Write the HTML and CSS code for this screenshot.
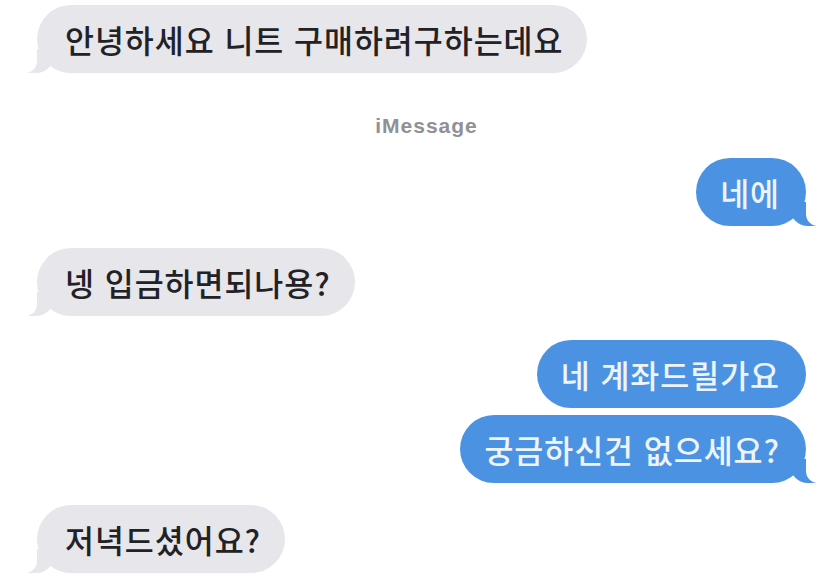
FILE: index.html
```html
<!DOCTYPE html>
<html lang="ko">
<head>
    <meta charset="UTF-8">
    <meta name="viewport" content="width=device-width, initial-scale=1.0">
    <title>Messages</title>
    <link rel="stylesheet" href="styles.css">
</head>
<body>
    <div class="chat">
        <div class="bubble them tail first">안녕하세요 니트 구매하려구하는데요</div>

        <div class="service">iMessage</div>

        <div class="bubble me tail">네에</div>

        <div class="bubble them tail">넹 입금하면되나용?</div>

        <div class="bubble me group">네 계좌드릴가요</div>
        <div class="bubble me tail close">궁금하신건 없으세요?</div>

        <div class="bubble them tail">저녁드셨어요?</div>
    </div>
</body>
</html>
```

FILE: styles.css
```css
* {
    margin: 0;
    padding: 0;
    box-sizing: border-box;
}

body {
    background: #ffffff;
    font-family: 'Noto Sans CJK KR', 'Noto Sans', sans-serif;
    overflow: hidden;
}

.chat {
    display: flex;
    flex-direction: column;
    padding: 5px 29px 0 37px;
}

.bubble {
    position: relative;
    height: 68px;
    line-height: 68px;
    padding: 0 24px 0 28px;
    border-radius: 34px;
    font-size: 31.5px;
    font-weight: 500;
    letter-spacing: 0.95px;
    white-space: nowrap;
    margin-top: 22px;
}

.bubble.first {
    margin-top: 0;
}

.them {
    align-self: flex-start;
    background: #e6e6eb;
    color: #222226;
}

.me {
    align-self: flex-end;
    background: #4b93e2;
    color: #eef4fc;
    padding: 0 26px 0 24px;
}

.me.group {
    margin-top: 24px;
}

.me.close {
    margin-top: 7px;
}

/* bubble tails */
.tail::before,
.tail::after {
    content: "";
    position: absolute;
    bottom: 0;
    height: 24px;
}

.them.tail::before {
    left: -9px;
    width: 26px;
    background: #e6e6eb;
    border-bottom-right-radius: 18px;
}

.them.tail::after {
    left: -14px;
    width: 14px;
    background: #ffffff;
    border-bottom-right-radius: 12px;
}

.me.tail::before {
    right: -10px;
    width: 26px;
    background: #4b93e2;
    border-bottom-left-radius: 18px;
}

.me.tail::after {
    right: -15px;
    width: 15px;
    background: #ffffff;
    border-bottom-left-radius: 12px;
}

.service {
    align-self: center;
    margin: 41px 0 0 10px;
    font-family: 'Liberation Sans', Arial, sans-serif;
    font-size: 21px;
    font-weight: bold;
    letter-spacing: 1px;
    color: #909096;
    line-height: 24px;
}

.service + .bubble {
    margin-top: 20px;
}
```
